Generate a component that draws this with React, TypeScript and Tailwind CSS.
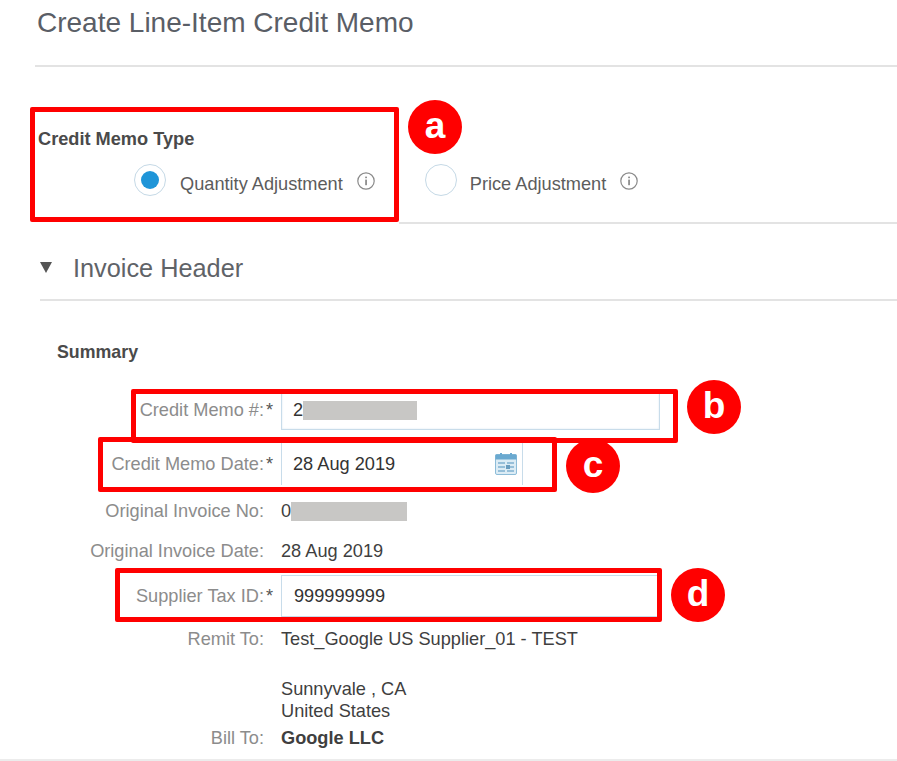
import React from "react";

function Info() {
  return (
    <svg width="20" height="20" viewBox="0 0 20 20" fill="none" className="shrink-0">
      <circle cx="10" cy="10" r="8.2" stroke="#8a8a8a" strokeWidth="1.2" />
      <rect x="9.3" y="8.6" width="1.5" height="5.6" fill="#777" />
      <rect x="9.3" y="5.6" width="1.5" height="1.6" fill="#777" />
    </svg>
  );
}

function CalendarIcon() {
  return (
    <svg width="22" height="22" viewBox="0 0 22 22" className="shrink-0">
      <rect x="0.5" y="1.5" width="21" height="20" rx="1.5" fill="#dcecf5" stroke="#8dbcd8" />
      <rect x="0.5" y="1.5" width="21" height="5" fill="#6aa9d0" />
      <rect x="5" y="0" width="2" height="3" fill="#6aa9d0" />
      <rect x="15" y="0" width="2" height="3" fill="#6aa9d0" />
      <path d="M3 10h7M12 10h7M3 14h7M12 14h7M3 18h7M12 18h7" stroke="#7fb0cf" strokeWidth="1.6" />
      <rect x="11" y="12" width="4" height="4" fill="#6a9dbf" />
    </svg>
  );
}

function Label({ children }: { children: React.ReactNode }) {
  return <div className="w-[264px] shrink-0 text-right text-[#8c8c8c]">{children}</div>;
}

function RequiredLabel({ children }: { children: React.ReactNode }) {
  return (
    <div className="w-[264px] shrink-0 text-right text-[#8c8c8c] whitespace-nowrap">
      {children}
      <span className="inline-block w-0 translate-x-[2px] text-[#555]">*</span>
    </div>
  );
}

function Annotation({ box, letter, circle }: { box: string; letter: string; circle: string }) {
  return (
    <>
      <div className={`absolute border-[5px] border-[#ff0000] rounded-[2px] ${box}`} />
      <div
        className={`absolute flex items-center justify-center w-[54px] h-[54px] rounded-full bg-[#ff0000] text-white font-bold text-[37px] leading-none pb-1 ${circle}`}
      >
        {letter}
      </div>
    </>
  );
}

export default function App() {
  return (
    <div className="relative w-[897px] h-[761px] overflow-hidden bg-white text-[18.2px] leading-[22px] text-[#3f3f3f] [font-family:'Liberation_Sans',Arial,sans-serif]">
      <h1 className="pl-[37px] pt-[6px] h-[65px] text-[28px] leading-[34px] font-normal text-[#5a5e66]">
        Create Line-Item Credit Memo
      </h1>
      <div className="ml-[35px] h-[2px] bg-[#e3e3e3]" />

      <section className="h-[155px] pt-[62px]">
        <div className="pl-[38px] font-bold text-[#4a4a4a] leading-[20px]">Credit Memo Type</div>
        <div className="flex items-center mt-[14px] h-[34px]">
          <div className="ml-[134px] w-[32px] h-[32px] rounded-full border border-[#c5d9e6] flex items-center justify-center">
            <div className="w-[18px] h-[18px] rounded-full bg-[#1f95d8]" />
          </div>
          <span className="ml-[14px] pt-[7px] text-[#5c5c5c]">Quantity Adjustment</span>
          <span className="ml-[13px] pt-[2px]"><Info /></span>
          <div className="ml-[49px] w-[32px] h-[32px] rounded-full border border-[#c5d9e6]" />
          <span className="ml-[13px] pt-[7px] text-[#5c5c5c]">Price Adjustment</span>
          <span className="ml-[13px] pt-[2px]"><Info /></span>
        </div>
      </section>
      <div className="ml-[399px] h-[2px] bg-[#e3e3e3]" />

      <div className="flex items-center h-[75px] pl-[40px]">
        <div className="w-0 h-0 mt-[12px] border-x-[6.5px] border-x-transparent border-t-[11px] border-t-[#555]" />
        <span className="ml-[21px] pt-[12px] text-[25.3px] text-[#5f6368]">Invoice Header</span>
      </div>
      <div className="ml-[40px] h-[2px] bg-[#e3e3e3]" />

      <div className="pl-[57px] pt-[40px] h-[75px] font-bold text-[17.8px] text-[#4a4a4a]">Summary</div>

      <div className="flex items-center h-[42px] mt-[13px]">
        <RequiredLabel>Credit Memo #:</RequiredLabel>
        <div className="ml-[17px] w-[379px] h-[40px] flex items-center pl-[11px] border border-[#c8dcea] shadow-[inset_0_0_2px_#d5e5ef]">
          <span className="text-[#333]">2</span>
          <div className="w-[114px] h-[19px] bg-[#c8c7c5]" />
        </div>
      </div>

      <div className="flex items-center h-[43px] mt-[11px]">
        <RequiredLabel>Credit Memo Date:</RequiredLabel>
        <div className="ml-[17px] w-[242px] h-[43px] flex items-center justify-between pl-[11px] pr-[5px] border-x border-[#c8dcea]">
          <span className="text-[#333]">28 Aug 2019</span>
          <CalendarIcon />
        </div>
      </div>

      <div className="flex items-center h-[22px] mt-[15px]">
        <Label>Original Invoice No:</Label>
        <div className="ml-[17px] flex items-center">
          <span>0</span>
          <div className="w-[116px] h-[19px] bg-[#c8c7c5]" />
        </div>
      </div>

      <div className="flex items-center h-[22px] mt-[18px]">
        <Label>Original Invoice Date:</Label>
        <div className="ml-[17px]">28 Aug 2019</div>
      </div>

      <div className="flex items-center h-[42px] mt-[13px]">
        <RequiredLabel>Supplier Tax ID:</RequiredLabel>
        <div className="ml-[17px] w-[380px] h-[42px] flex items-center pl-[12px] border border-[#c8dcea]">
          <span className="text-[#333]">999999999</span>
        </div>
      </div>

      <div className="flex items-center h-[22px] mt-[11px]">
        <Label>Remit To:</Label>
        <div className="ml-[17px]">Test_Google US Supplier_01 - TEST</div>
      </div>

      <div className="pl-[281px] mt-[28px]">
        <div>Sunnyvale , CA</div>
        <div>United States</div>
      </div>

      <div className="flex items-center h-[22px] mt-[5px]">
        <Label>Bill To:</Label>
        <div className="ml-[17px] font-bold">Google LLC</div>
      </div>

      <div className="absolute left-0 right-0 bottom-0 h-[2px] bg-[#ececec]" />

      <Annotation box="left-[30px] top-[107px] w-[369px] h-[115px]" circle="left-[408px] top-[100px]" letter="a" />
      <Annotation box="left-[131px] top-[389px] w-[547px] h-[54px]" circle="left-[687px] top-[380px]" letter="b" />
      <Annotation box="left-[98px] top-[437px] w-[459px] h-[55px]" circle="left-[566px] top-[439px]" letter="c" />
      <Annotation box="left-[115px] top-[568px] w-[547px] h-[54px]" circle="left-[671px] top-[568px]" letter="d" />
    </div>
  );
}
